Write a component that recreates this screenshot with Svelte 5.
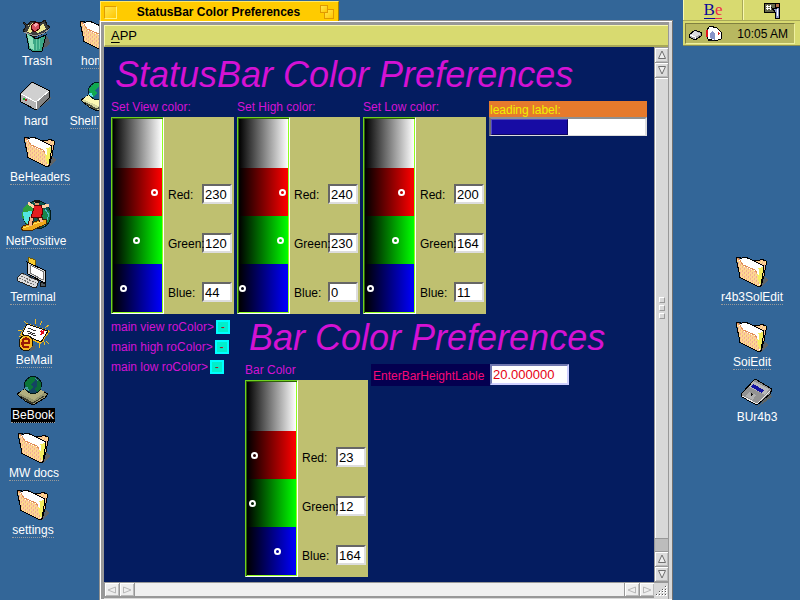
<script>
  const icons = [
    { name: 'Trash', kind: 'trash', x: -3, y: 20, link: false },
    { name: 'home', kind: 'folder', x: 56, y: 20, link: true },
    { name: 'hard', kind: 'drive', x: -4, y: 80, link: false },
    { name: 'ShellTools', kind: 'book', x: 57, y: 80, link: true },
    { name: 'BeHeaders', kind: 'folder', x: 0, y: 136, link: true },
    { name: 'NetPositive', kind: 'surfer', x: -4, y: 200, link: true },
    { name: 'Terminal', kind: 'terminal', x: -7, y: 256, link: true },
    { name: 'BeMail', kind: 'mail', x: -6, y: 319, link: true },
    { name: 'BeBook', kind: 'book', x: -7, y: 374, link: true, selected: true },
    { name: 'MW docs', kind: 'folder', x: -6, y: 432, link: true },
    { name: 'settings', kind: 'folder', x: -7, y: 489, link: true },
  ];
  const rightIcons = [
    { name: 'r4b3SolEdit', kind: 'folder', x: 8, y: 256, link: true },
    { name: 'SoiEdit', kind: 'folder', x: 8, y: 321, link: true },
    { name: 'BUr4b3', kind: 'floppy', x: 3, y: 376, link: false },
  ];
  let colors = $state([
    { id: 'view', title: 'Set View color:', rgb: [230, 120, 44] },
    { id: 'high', title: 'Set High color:', rgb: [240, 230, 0] },
    { id: 'low', title: 'Set Low color:', rgb: [200, 164, 11] },
  ]);
  let bar = $state({ id: 'bar', title: 'Bar Color', rgb: [23, 12, 164] });
  let barHeight = $state('20.000000');
  const channels = ['Red', 'Green', 'Blue'];
  const drops = ['main view roColor>', 'main high roColor>', 'main low roColor>'];
</script>

{#snippet art(kind)}
  <svg width="32" height="32" viewBox="0 0 32 32" shape-rendering="crispEdges" aria-hidden="true">
    {#if kind === 'folder'}
      <defs>
        <pattern id="weave" width="4" height="4" patternUnits="userSpaceOnUse">
          <rect width="4" height="4" fill="#fdcf98" />
          <path d="M0 0h1v2h-1zM2 2h1v2h-1z" fill="#f0b090" />
          <path d="M1 1h1v2h-1zM3 3h1v1h-1z" fill="#ffe480" />
        </pattern>
      </defs>
      <path d="M25 31L32 24L29 20Z" fill="#5f6468" />
      <path d="M14 6L18 4L23 5L25 3L30 5L30 9L28 20L25 30L20 26Z" fill="url(#weave)" stroke="#000" />
      <path d="M3 4L6 1L12 2L27 10L26 24L24 30L4 16Z" fill="#fff" />
      <path d="M6 2L9 1L14 3L28 10" fill="none" stroke="#000" />
      <path d="M22 12L27 11L26 24L24 30L21 20Z" fill="#f4ee60" />
      <path d="M19 10L23 13L23 20L20 17Z" fill="#fff" />
      <path d="M1 3L4 5L7 10L19 15L21 18L24 31L4 21Z" fill="url(#weave)" />
      <path d="M1 2L4 4L7 9L19 14L21 17" fill="none" stroke="#e09058" />
      <path d="M4 21L0 2L3 1L6 3" fill="none" stroke="#000" />
      <path d="M3 21L23 31L25 30L28 10" fill="none" stroke="#000" />
    {:else if kind === 'trash'}
      <path d="M21 30L29 24L27 17L23 15Z" fill="#555d62" />
      <path d="M5 12L8 29L13 32L21 31L25 15L15 19Z" fill="#3aa785" stroke="#000" />
      <path d="M6 14L9 28L13 30L12 18Z" fill="#91dfbb" />
      <path d="M15 19V30M18 19V29" stroke="#67c9a4" />
      <path d="M2 2L7 5L10 1L20 3L24 0L26 5L29 7L25 12L14 17L2 11L5 7Z" fill="#3c3c3c" stroke="#111" />
      <path d="M4 4L9 6L6 12L9 13L13 10L17 13L25 9L22 3L18 7L11 3L8 6Z" fill="#eee995" />
      <path d="M11 5L15 2L19 4L18 9L14 12L10 9Z" fill="#d85360" stroke="#400" />
      <path d="M12 5L15 3L17 5L14 7Z" fill="#f8a4aa" />
      <path d="M3 12L8 14L14 16L23 13L28 9" stroke="#989898" fill="none" />
    {:else if kind === 'drive'}
      <path d="M17 30L32 18L29 16Z" fill="#5d6870" />
      <path d="M0 14L12 2L30 11L29 18L16 30L1 22Z" fill="#b5b5b5" stroke="#000" />
      <path d="M1 14L12 3L29 11L16 22Z" fill="#d0d0d0" />
      <path d="M16 22L29 12V18L17 29Z" fill="#858585" />
      <path d="M1 14L16 22V29M16 22L29 11" fill="none" stroke="#fff" />
      <path d="M3 18H5V20H3Z" fill="#18b020" />
      <path d="M5 19H7V21H5Z" fill="#a02020" />
    {:else if kind === 'book'}
      <path d="M17 31L31 20L27 17Z" fill="#57626b" />
      <path d="M0 20L13 12L31 20L28 24L16 31L8 27Z" fill="#d8d8a0" stroke="#000" />
      <path d="M2 19L13 11L28 18L17 26Z" fill="#fffab5" />
      <path d="M3 22L16 29L27 22M5 24L16 30" fill="none" stroke="#555540" />
      <circle cx="16" cy="11" r="8.5" fill="#1c618e" stroke="#021d20" />
      <path d="M8 8L13 3L18 3L18 7L14 10L16 13L12 17L9 13Z" fill="#10a850" />
      <path d="M20 5L24 9V14L20 18L17 15L20 12Z" fill="#12984e" />
      <path d="M8 13L11 13L12 17L9 16Z" fill="#60e0e8" />
      <path d="M18 4L21 7" stroke="#60d0d8" />
    {:else if kind === 'surfer'}
      <circle cx="17" cy="15" r="14" fill="#0a584d" stroke="#031b1a" />
      <path d="M3 8L8 3L14 5L15 12L10 18L14 27L7 25L2 17Z" fill="#2d9f3d" />
      <path d="M3 12L12 11L14 17L8 25L4 20Z" fill="#52e4e3" />
      <path d="M23 9L30 12L29 22L24 26L21 19Z" fill="#18864d" />
      <path d="M25 9L29 15L26 22M20 22L25 26" fill="none" stroke="#4ab5cc" />
      <path d="M3 26L23 19L27 20L26 24L13 30L4 31L1 29Z" fill="#eea91a" stroke="#482704" />
      <path d="M3 28L23 21" stroke="#ffe55c" />
      <path d="M12 17L10 25M19 17L22 21" stroke="#37190e" stroke-width="5" />
      <path d="M12 16L10 26M19 16L22 22" stroke="#f6b58c" stroke-width="3" />
      <path d="M13 6L21 5L23 11L21 18L11 17L13 11Z" fill="#e31d20" stroke="#5b0000" />
      <path d="M14 7L8 3M22 7L29 5" stroke="#ffd0a6" stroke-width="3" />
      <path d="M14 0H19V5H15Z" fill="#dd9c70" />
      <path d="M14 0H20V3H15Z" fill="#151310" />
    {:else if kind === 'terminal'}
      <path d="M11 1L18 4L19 11L11 16Z" fill="#f8cc30" stroke="#6e5907" />
      <path d="M10 6L29 15L28 27L11 18Z" fill="#d9d9d9" stroke="#000" />
      <path d="M13 9L27 16L26 24L13 17Z" fill="#fff" stroke="#777" />
      <path d="M0 22L5 17L22 25L19 32L15 31L1 25Z" fill="#ddd" stroke="#222" />
      <path d="M2 22L17 29M4 20L19 27M6 18L20 25" stroke="#6c6c6c" stroke-dasharray="2 1" />
      <path d="M24 26L29 28L28 31L23 30Z" fill="#505a61" stroke="#111" />
    {:else if kind === 'mail'}
      <path d="M6 2L9 5M17 0V5M24 2L22 6M31 6L27 9M0 11H4M28 22L31 25M21 23V29M25 20L27 26M1 17H4" stroke="#edba27" />
      <path d="M2 16L9 4L32 12L23 25Z" fill="#f6b714" />
      <path d="M4 15L9 5L30 12L23 23Z" fill="#fff" stroke="#111" />
      <path d="M10 9L18 12M9 12L17 15M10 14L18 17" stroke="#333" />
      <path d="M23 12L26 15M26 11L23 16" stroke="#e30a1b" stroke-width="2" />
      <ellipse cx="8" cy="24" rx="7" ry="8" fill="#f8b721" stroke="#1b1608" />
      <path d="M5 24H11V21L8 19L5 21L4 25L6 28L11 28" fill="none" stroke="#971b05" stroke-width="2" />
      <path d="M2 21L5 18" stroke="#fff26c" />
      <path d="M14 27L18 26L16 31L11 32Z" fill="#55606a" />
    {:else}
      <path d="M17 31L31 21L29 16Z" fill="#5d6466" />
      <path d="M0 18L14 3L31 13L29 18L16 29L1 21Z" fill="#939393" stroke="#000" />
      <path d="M12 5L28 13L24 19L8 11Z" fill="#b9b9b9" />
      <path d="M12 8L23 14L21 17L10 11Z" fill="#1413a2" />
      <path d="M8 16L15 19L12 24L4 20Z" fill="#b0b0b0" />
      <path d="M10 17L12 18L10 21Z" fill="#111" />
      <path d="M1 20L16 28L29 15" stroke="#eee" fill="none" />
    {/if}
  </svg>
{/snippet}

{#snippet desktopIcon(i)}
  <button class="icon" class:selected={i.selected}>
    {@render art(i.kind)}
    <span class:link={i.link}>{i.name}</span>
  </button>
{/snippet}

{#snippet arrow(dir)}
  <svg width="10" height="10" viewBox="0 0 10 10" aria-hidden="true">
    {#if dir === 'up'}<path d="M5 1L8.500 8.500H1.500Z" />
    {:else if dir === 'down'}<path d="M5 9L8.500 1.500H1.500Z" />
    {:else if dir === 'left'}<path d="M1 5L8.500 8V2Z" />
    {:else}<path d="M9 5L1.500 8V2Z" />{/if}
  </svg>
{/snippet}

{#snippet picker(c)}
  <section class="group">
    <h3>{c.title}</h3>
    <div class="picker">
      <div class="ramps">
        <div class="gray"></div>
        {#each channels as ch, n}
          <input class="ramp {ch.toLowerCase()}" type="range" min="0" max="255" bind:value={c.rgb[n]} aria-label="{c.title} {ch}" />
        {/each}
      </div>
      <div class="fields">
        {#each channels as ch, n}
          <div class="field">
            <label for="{c.id}-{ch}">{ch}:</label>
            <input id="{c.id}-{ch}" type="text" bind:value={c.rgb[n]} />
          </div>
        {/each}
      </div>
    </div>
  </section>
{/snippet}

<div class="desktop">
  {#each icons as i}
    <div class="place" style="left:{i.x}px;top:{i.y}px">{@render desktopIcon(i)}</div>
  {/each}
  {#each rightIcons as i}
    <div class="place" style="right:{i.x}px;top:{i.y}px">{@render desktopIcon(i)}</div>
  {/each}

  <main class="window">
    <header class="tab">
      <button class="close" aria-label="Close"></button>
      <span class="title">StatusBar Color Preferences</span>
      <button class="zoom" aria-label="Zoom"><i></i><b></b></button>
    </header>
    <div class="frame">
      <nav class="menubar"><button><u>A</u>PP</button></nav>
      <div class="body">
        <div class="pane">
          <h1>StatusBar Color Preferences</h1>
          <div class="row">
            {#each colors as c}{@render picker(c)}{/each}
            <div class="status">
              <div class="leading">leading label:</div>
              <div class="track"><div class="fill" style="width:50%"></div></div>
            </div>
          </div>
          <div class="lower">
            <ul class="drops">
              {#each drops as d}
                <li>{d}<button aria-label={d}>-</button></li>
              {/each}
            </ul>
            <div class="bar-group">
              <h1>Bar Color Preferences</h1>
              <div class="row">
                {@render picker(bar)}
                <div class="height">
                  <label for="bar-height">EnterBarHeightLable</label>
                  <input id="bar-height" type="text" bind:value={barHeight} />
                </div>
              </div>
            </div>
          </div>
        </div>
        <div class="vscroll">
          <button aria-label="Scroll up">{@render arrow('up')}</button>
          <button aria-label="Scroll down">{@render arrow('down')}</button>
          <div class="thumb"><i></i><i></i><i></i></div>
          <div class="gap"></div>
          <button aria-label="Scroll up">{@render arrow('up')}</button>
          <button aria-label="Scroll down">{@render arrow('down')}</button>
        </div>
        <div class="hscroll">
          <button aria-label="Scroll left">{@render arrow('left')}</button>
          <button aria-label="Scroll right">{@render arrow('right')}</button>
          <div class="empty"></div>
          <button aria-label="Scroll left">{@render arrow('left')}</button>
          <button aria-label="Scroll right">{@render arrow('right')}</button>
        </div>
        <svg class="grip" width="14" height="16" viewBox="0 0 14 16" shape-rendering="crispEdges" aria-hidden="true">
          <path d="M11 3h2v2h-2zM8 6h2v2h-2zM11 6h2v2h-2zM5 9h2v2h-2zM8 9h2v2h-2zM11 9h2v2h-2zM2 12h2v2h-2zM5 12h2v2h-2zM8 12h2v2h-2zM11 12h2v2h-2z" fill="#fff" />
          <path d="M11 3h1v1h-1zM8 6h1v1h-1zM11 6h1v1h-1zM5 9h1v1h-1zM8 9h1v1h-1zM11 9h1v1h-1zM2 12h1v1h-1zM5 12h1v1h-1zM8 12h1v1h-1zM11 12h1v1h-1z" fill="#555" />
        </svg>
      </div>
    </div>
  </main>

  <aside class="deskbar">
    <div class="menus">
      <button class="be" aria-label="Be menu"><span class="b">B</span><span class="e">e</span></button>
      <button aria-label="Running applications">
        <svg width="18" height="18" viewBox="0 0 18 18" shape-rendering="crispEdges" aria-hidden="true">
          <path d="M1 2H13V11H1Z" fill="#66684c" stroke="#000" />
          <path d="M3 5H8M3 7H8M4 4V9M7 4V9" stroke="#fff" />
          <path d="M12 2H16V6H12Z" fill="#b06c48" stroke="#000" />
          <path d="M9 7L12 8L16 6V17H12V11Z" fill="#8f9cc8" stroke="#000" />
          <path d="M14 8V15" stroke="#fff" />
        </svg>
      </button>
    </div>
    <div class="tray">
      <svg width="38" height="18" viewBox="0 0 38 18" shape-rendering="crispEdges" aria-hidden="true">
        <path d="M1 10L7 5L14 8L13 11L7 15L1 12Z" fill="#aaa" stroke="#000" />
        <path d="M2 10L7 6L13 9L7 12Z" fill="#ddd" />
        <path d="M2 10L7 12V14" stroke="#fff" fill="none" />
        <path d="M18 6L22 1L29 3L33 7V14L27 16L20 14Z" fill="#fff" stroke="#000" />
        <path d="M22 8L25 6L27 9V15L22 13Z" fill="#8894c8" />
        <path d="M18 5H20V12H18Z" fill="#e0131c" />
        <path d="M30 7L32 9L30 10Z" fill="#d82b25" />
        <path d="M20 15H27" stroke="#111" />
      </svg>
      <time>10:05 AM</time>
    </div>
  </aside>
</div>

<style>
  :global(body) {
    margin: 0;
  }
  .desktop {
    position: relative;
    min-height: 100vh;
    overflow: hidden;
    background: #336698;
    font: 12px/14px 'Liberation Sans', Arial, sans-serif;
    color: #000;
  }
  .desktop * {
    box-sizing: border-box;
  }
  button {
    font: inherit;
    color: inherit;
    padding: 0;
    border: 0;
    background: none;
    border-radius: 0;
  }
  .place {
    position: absolute;
    width: 80px;
  }
  .icon {
    display: flex;
    flex-direction: column;
    align-items: center;
    gap: 2px;
    width: 100%;
    color: #fff;
  }
  .icon span {
    height: 15px;
    white-space: nowrap;
  }
  .icon .link {
    border-bottom: 1px dotted #9a9a9a;
  }
  .icon.selected span {
    background: #000;
    padding: 0 1px;
  }
  .icon.selected svg {
    filter: brightness(0.7);
  }

  .window {
    position: absolute;
    left: 99px;
    right: 127px;
    top: 1px;
    bottom: 0;
    display: flex;
    flex-direction: column;
  }
  .tab {
    position: relative;
    z-index: 1;
    display: flex;
    align-items: center;
    justify-content: space-between;
    align-self: flex-start;
    width: 239px;
    height: 20px;
    margin: 0 0 -1px 1px;
    padding: 1px 4px 0 3px;
    background: #ffcb00;
    border-top: 1px solid #ffe768;
    border-left: 1px solid #ffe768;
    border-right: 1px solid #a98300;
  }
  .title {
    font-weight: bold;
    white-space: nowrap;
  }
  .close {
    width: 13px;
    height: 13px;
    border: 1px solid #e29c00;
    border-right-color: #fff27a;
    border-bottom-color: #fff27a;
    background: linear-gradient(135deg, #ffe750, #ffc600);
  }
  .zoom {
    position: relative;
    width: 14px;
    height: 14px;
  }
  .zoom i,
  .zoom b {
    position: absolute;
    border: 1px solid #e09a00;
    background: linear-gradient(135deg, #ffe750, #ffc600);
  }
  .zoom i {
    right: 0;
    bottom: 0;
    width: 10px;
    height: 10px;
  }
  .zoom b {
    left: 0;
    top: 0;
    width: 8px;
    height: 8px;
  }
  .frame {
    flex: 1;
    min-height: 0;
    display: flex;
    flex-direction: column;
    padding: 5px 5px 2px;
    background: #d8d8d8;
    box-shadow: inset 1px 1px #909090, inset -1px 0 #707070, inset 2px 2px #fff,
      inset 0 -1px #fff, inset -4px 0 #d8d8d8, inset 5px 5px #989898, inset -5px 0 #989898;
  }
  .menubar {
    flex: none;
    height: 22px;
    padding-left: 6px;
    display: flex;
    align-items: center;
    background: #d8da70;
    border-top: 1px solid #f8f8b0;
    border-left: 1px solid #f8f8b0;
    border-bottom: 2px solid #a8a858;
    font-size: 13px;
  }
  .menubar u {
    text-underline-offset: 2px;
  }
  .body {
    flex: 1;
    min-height: 0;
    display: grid;
    grid-template: minmax(0, 1fr) 16px / minmax(0, 1fr) 14px;
  }
  .pane {
    background: #041c60;
    padding: 8px 0 0 7px;
    overflow: hidden;
    color: #d412d4;
  }
  h1 {
    margin: 0 0 5px 4px;
    font: italic 36px/40px 'Liberation Sans', Arial, sans-serif;
    white-space: nowrap;
  }
  h3 {
    margin: 0 0 3px;
    font: inherit;
    white-space: nowrap;
  }
  .row {
    display: flex;
    align-items: flex-start;
    gap: 3px;
  }
  .picker {
    display: flex;
    width: 123px;
    background: #bfc070;
    color: #000;
  }
  .ramps {
    width: 53px;
    border: 1px solid #70d020;
    border-right-color: #fff;
    border-bottom-color: #fff;
    box-shadow: inset 1px 1px #2c6008, inset -1px -1px #90ff20;
    padding: 1px;
    display: flex;
    flex-direction: column;
  }
  .gray {
    height: 49px;
    background: linear-gradient(90deg, #000, #fff);
  }
  .ramp {
    appearance: none;
    display: block;
    width: 100%;
    height: 48px;
    margin: 0;
    background: linear-gradient(90deg, #000, var(--tint));
  }
  .ramp.red {
    --tint: #f00;
  }
  .ramp.green {
    --tint: #0f0;
  }
  .ramp.blue {
    --tint: #00f;
  }
  .ramp::-webkit-slider-thumb {
    appearance: none;
    width: 7px;
    height: 7px;
    border: 2px solid #fff;
    border-radius: 50%;
    background: transparent;
  }
  .fields {
    padding: 67px 0 0 4px;
    display: flex;
    flex-direction: column;
    gap: 29px;
  }
  .field {
    display: flex;
    align-items: flex-end;
    height: 20px;
  }
  .field label {
    position: relative;
    z-index: 1;
    width: 34px;
    padding-bottom: 2px;
    white-space: nowrap;
  }
  input[type='text'] {
    width: 30px;
    height: 20px;
    padding: 0 0 0 1px;
    border: 2px solid #666;
    border-right-color: #ddd;
    border-bottom-color: #ddd;
    border-radius: 0;
    background: #fff;
    font: 13px/16px 'Liberation Sans', Arial, sans-serif;
    color: #000;
    outline: 0;
  }
  .status {
    width: 158px;
    margin-top: 1px;
  }
  .leading {
    height: 16px;
    padding: 2px 0 0 1px;
    background: #e67a2c;
    color: #f0f000;
  }
  .track {
    height: 19px;
    border: 2px solid #707070;
    border-top-color: #909090;
    border-right-color: #ddd;
    border-bottom: 1px solid #ddd;
    background: #fff;
  }
  .fill {
    height: 100%;
    background: #170ca4;
    border: 1px solid #0c0660;
    border-top-color: #5048c8;
    border-left-color: #5048c8;
  }
  .lower {
    display: grid;
    grid-template-columns: 131px minmax(0, 1fr);
    gap: 3px;
    padding-top: 3px;
  }
  .bar-group {
    padding-top: 1px;
  }
  .drops {
    list-style: none;
    margin: 0;
    padding: 0;
  }
  .drops li {
    display: flex;
    align-items: center;
    gap: 2px;
    height: 20px;
    white-space: nowrap;
  }
  .drops button {
    width: 14px;
    height: 14px;
    border: 2px solid #00ffff;
    background: #00f0cc;
    color: #a02020;
    line-height: 10px;
  }
  .height {
    display: flex;
    align-items: flex-start;
    margin-top: 1px;
  }
  .height label {
    width: 119px;
    height: 22px;
    padding: 5px 0 0 2px;
    background: #040050;
    color: #f80878;
  }
  .height input[type='text'] {
    width: 79px;
    height: 21px;
    border-color: #7078b0 #d0d0ff #d0d0ff #7078b0;
    color: #e60012;
  }

  .vscroll,
  .hscroll {
    display: flex;
    background: #989898;
    gap: 1px;
  }
  .vscroll {
    flex-direction: column;
    padding: 1px 0 1px 1px;
  }
  .hscroll {
    padding: 1px 0 2px 1px;
  }
  .vscroll button,
  .hscroll button {
    flex: none;
    display: grid;
    place-items: center;
    background: #dcdcdc;
    box-shadow: inset 1px 1px #fff, inset -1px -1px #bbb;
  }
  .vscroll button {
    height: 14px;
  }
  .hscroll button {
    width: 14px;
    background: #eee;
  }
  .vscroll path,
  .hscroll path {
    fill: #eee;
    stroke: #707070;
  }
  .hscroll path {
    stroke: #b8b8b8;
  }
  .thumb {
    flex: 1;
    display: flex;
    flex-direction: column;
    align-items: center;
    justify-content: center;
    gap: 2px;
    background: #d8d8d8;
    box-shadow: inset 1px 1px #fff;
  }
  .thumb i {
    width: 6px;
    height: 6px;
    border: 1px solid #fff;
    border-right-color: #999;
    border-bottom-color: #999;
  }
  .gap {
    flex: none;
    height: 12px;
    background: #bcbcbc;
  }
  .empty {
    flex: 1;
    background: #f0f0f0;
  }
  .grip {
    background: #d8d8d8;
    border-top: 1px solid #989898;
  }

  .deskbar {
    position: absolute;
    top: 0;
    right: 0;
    width: 117px;
    background: #d8da70;
    border-bottom: 1px solid #8c8c50;
  }
  .menus {
    display: flex;
    height: 21px;
    border-bottom: 1px solid #a8a858;
  }
  .menus button {
    flex: 1;
    display: flex;
    align-items: center;
    justify-content: center;
    border-left: 1px solid #f8f8b0;
  }
  .menus .be {
    flex: none;
    width: 60px;
    border-right: 1px solid #a8a858;
    font: 17px/17px 'Liberation Serif', 'Times New Roman', serif;
  }
  .be span {
    border-bottom: 1px solid currentColor;
    height: 18px;
  }
  .be .b {
    color: #0a0a98;
  }
  .be .e {
    color: #f02848;
  }
  .tray {
    display: flex;
    align-items: center;
    justify-content: space-between;
    height: 21px;
    margin: 2px 5px 1px 2px;
    padding: 0 6px 0 2px;
    background: #b8b860;
    border: 1px solid #808040;
    border-right-color: #f0f0a0;
    border-bottom-color: #f0f0a0;
  }
</style>
